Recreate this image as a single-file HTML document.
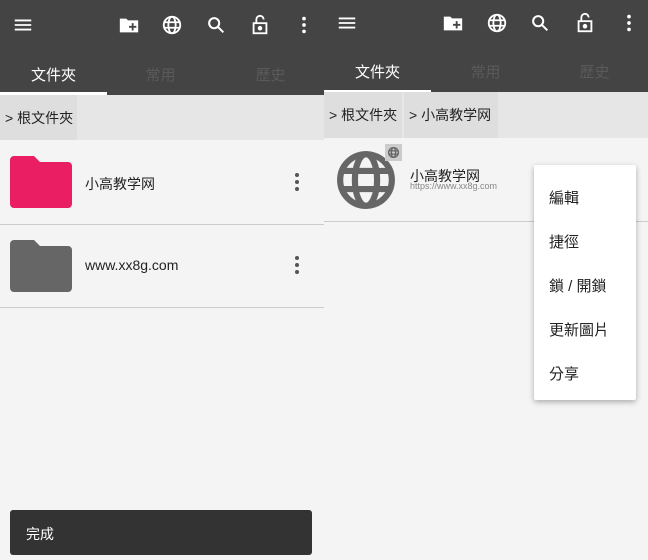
<!DOCTYPE html>
<html><head><meta charset="utf-8"><style>
*{margin:0;padding:0;box-sizing:border-box}
body{width:648px;height:560px;overflow:hidden;background:#f4f4f4;font-family:"Liberation Sans","Noto Sans CJK TC",sans-serif;position:relative}
.p{position:absolute;top:0;width:324px;height:560px;background:#f4f4f4;overflow:hidden}
.tb{position:absolute;left:0;top:0;width:324px;background:#444}
.ic{position:absolute}
.tab{position:absolute;font-size:15px;color:#fff;width:107px;text-align:center}
.tab.d{color:#5a5a5a}
.ul{position:absolute;left:0;width:107px;height:3px;background:#fff}
.bc{position:absolute;left:0;width:324px;background:#e6e6e6}
.seg{position:absolute;top:0;height:100%;background:#dedede;font-size:14px;color:#222;padding-left:5px;display:flex;align-items:center}
.div{position:absolute;left:0;width:324px;height:1px;background:#ccc}
.t{position:absolute;font-size:14px;color:#222}
</style></head><body>
<div class="p" style="left:0">
 <div class="tb" style="height:95px"></div>
 <svg class="ic" style="left:12px;top:14px" width="22" height="22" viewBox="0 0 24 24" fill="#fff"><path d="M3 6h18v2H3zM3 11h18v2H3zM3 16h18v2H3z"/></svg>
 <svg class="ic" style="left:118px;top:14px" width="22" height="22" viewBox="0 0 24 24" fill="#fff"><path d="M2 5h7l2 2h11v13H2z"/><path d="M15 10h2v3h3v2h-3v3h-2v-3h-3v-2h3z" fill="#444"/></svg>
 <svg class="ic" style="left:161px;top:14px" width="22" height="22" viewBox="0 0 24 24" fill="none" stroke="#fff" stroke-width="2"><circle cx="12" cy="12" r="9"/><ellipse cx="12" cy="12" rx="4" ry="9"/><path d="M3 9h18M3 15h18"/></svg>
 <svg class="ic" style="left:205px;top:14px" width="22" height="22" viewBox="0 0 24 24" fill="none" stroke="#fff" stroke-width="2.2"><circle cx="10" cy="10" r="5.5"/><path d="M14 14l6 6"/></svg>
 <svg class="ic" style="left:249px;top:13px" width="22" height="24" viewBox="0 0 24 24" fill="none" stroke="#fff" stroke-width="2"><path d="M8 10V6a4 4 0 0 1 8 0"/><rect x="5" y="10" width="14" height="11"/><circle cx="12" cy="15.5" r="1.5" fill="#fff"/></svg>
 <svg class="ic" style="left:293px;top:14px" width="22" height="22" viewBox="0 0 24 24" fill="#fff"><circle cx="12" cy="5" r="2"/><circle cx="12" cy="12" r="2"/><circle cx="12" cy="19" r="2"/></svg>
 <div class="tab" style="left:0;top:64px">文件夾</div>
 <div class="tab d" style="left:107px;top:64px">常用</div>
 <div class="tab d" style="left:217px;top:64px">歷史</div>
 <div class="ul" style="top:92px"></div>
 <div class="bc" style="top:95px;height:45px"><div class="seg" style="left:0;width:77px">&gt; 根文件夾</div></div>
 <svg class="ic" style="left:10px;top:156px" width="62" height="52" viewBox="0 0 62 52"><path d="M0 4a4 4 0 0 1 4-4h20l6 6h28a4 4 0 0 1 4 4v38a4 4 0 0 1-4 4H4a4 4 0 0 1-4-4z" fill="#e91e63"/></svg>
 <div class="t" style="left:85px;top:174px">小高教学网</div>
 <svg class="ic" style="left:287px;top:171px" width="20" height="22" viewBox="0 0 20 22" fill="#555"><circle cx="10" cy="4" r="2"/><circle cx="10" cy="11" r="2"/><circle cx="10" cy="18" r="2"/></svg>
 <div class="div" style="top:224px"></div>
 <svg class="ic" style="left:10px;top:240px" width="62" height="52" viewBox="0 0 62 52"><path d="M0 4a4 4 0 0 1 4-4h20l6 6h28a4 4 0 0 1 4 4v38a4 4 0 0 1-4 4H4a4 4 0 0 1-4-4z" fill="#666"/></svg>
 <div class="t" style="left:85px;top:257px">www.xx8g.com</div>
 <svg class="ic" style="left:287px;top:254px" width="20" height="22" viewBox="0 0 20 22" fill="#555"><circle cx="10" cy="4" r="2"/><circle cx="10" cy="11" r="2"/><circle cx="10" cy="18" r="2"/></svg>
 <div class="div" style="top:307px"></div>
 <div style="position:absolute;left:10px;top:510px;width:302px;height:45px;background:#333;border-radius:3px;color:#fff;font-size:14px;padding:14px 0 0 16px">完成</div>
</div>
<div class="p" style="left:324px">
 <div class="tb" style="height:92px"></div>
 <svg class="ic" style="left:12px;top:12px" width="22" height="22" viewBox="0 0 24 24" fill="#fff"><path d="M3 6h18v2H3zM3 11h18v2H3zM3 16h18v2H3z"/></svg>
 <svg class="ic" style="left:118px;top:12px" width="22" height="22" viewBox="0 0 24 24" fill="#fff"><path d="M2 5h7l2 2h11v13H2z"/><path d="M15 10h2v3h3v2h-3v3h-2v-3h-3v-2h3z" fill="#444"/></svg>
 <svg class="ic" style="left:162px;top:12px" width="22" height="22" viewBox="0 0 24 24" fill="none" stroke="#fff" stroke-width="2"><circle cx="12" cy="12" r="9"/><ellipse cx="12" cy="12" rx="4" ry="9"/><path d="M3 9h18M3 15h18"/></svg>
 <svg class="ic" style="left:205px;top:12px" width="22" height="22" viewBox="0 0 24 24" fill="none" stroke="#fff" stroke-width="2.2"><circle cx="10" cy="10" r="5.5"/><path d="M14 14l6 6"/></svg>
 <svg class="ic" style="left:250px;top:11px" width="22" height="24" viewBox="0 0 24 24" fill="none" stroke="#fff" stroke-width="2"><path d="M8 10V6a4 4 0 0 1 8 0"/><rect x="5" y="10" width="14" height="11"/><circle cx="12" cy="15.5" r="1.5" fill="#fff"/></svg>
 <svg class="ic" style="left:294px;top:12px" width="22" height="22" viewBox="0 0 24 24" fill="#fff"><circle cx="12" cy="5" r="2"/><circle cx="12" cy="12" r="2"/><circle cx="12" cy="19" r="2"/></svg>
 <div class="tab" style="left:0;top:61px">文件夾</div>
 <div class="tab d" style="left:108px;top:61px">常用</div>
 <div class="tab d" style="left:217px;top:61px">歷史</div>
 <div class="ul" style="top:90px"></div>
 <div class="bc" style="top:92px;height:46px"><div class="seg" style="left:0;width:78px">&gt; 根文件夾</div><div class="seg" style="left:80px;width:94px">&gt; 小高教学网</div></div>
 <svg class="ic" style="left:11px;top:149px" width="62" height="62" viewBox="0 0 24 24" fill="none" stroke="#666" stroke-width="2.4"><circle cx="12" cy="12" r="10"/><ellipse cx="12" cy="12" rx="4.3" ry="10"/><path d="M2 8.5h20M2 15.5h20"/></svg>
 <div style="position:absolute;left:61px;top:144px;width:17px;height:17px;background:#ccc"></div>
 <svg class="ic" style="left:63px;top:146px" width="13" height="13" viewBox="0 0 24 24" fill="none" stroke="#666" stroke-width="2.5"><circle cx="12" cy="12" r="9"/><ellipse cx="12" cy="12" rx="4" ry="9"/><path d="M3 9h18M3 15h18"/></svg>
 <div class="t" style="left:86px;top:166px">小高教学网</div>
 <div style="position:absolute;left:86px;top:181px;font-size:9px;color:#888">https://www.xx8g.com</div>
 <div class="div" style="top:221px"></div>
 <div style="position:absolute;left:210px;top:165px;width:102px;height:235px;background:#fff;box-shadow:0 2px 6px rgba(0,0,0,.3);border-radius:2px;font-size:15px;color:#222">
  <div style="position:absolute;left:15px;top:22px">編輯</div>
  <div style="position:absolute;left:15px;top:66px">捷徑</div>
  <div style="position:absolute;left:15px;top:110px">鎖 / 開鎖</div>
  <div style="position:absolute;left:15px;top:154px">更新圖片</div>
  <div style="position:absolute;left:15px;top:198px">分享</div>
 </div>
</div>
</body></html>
